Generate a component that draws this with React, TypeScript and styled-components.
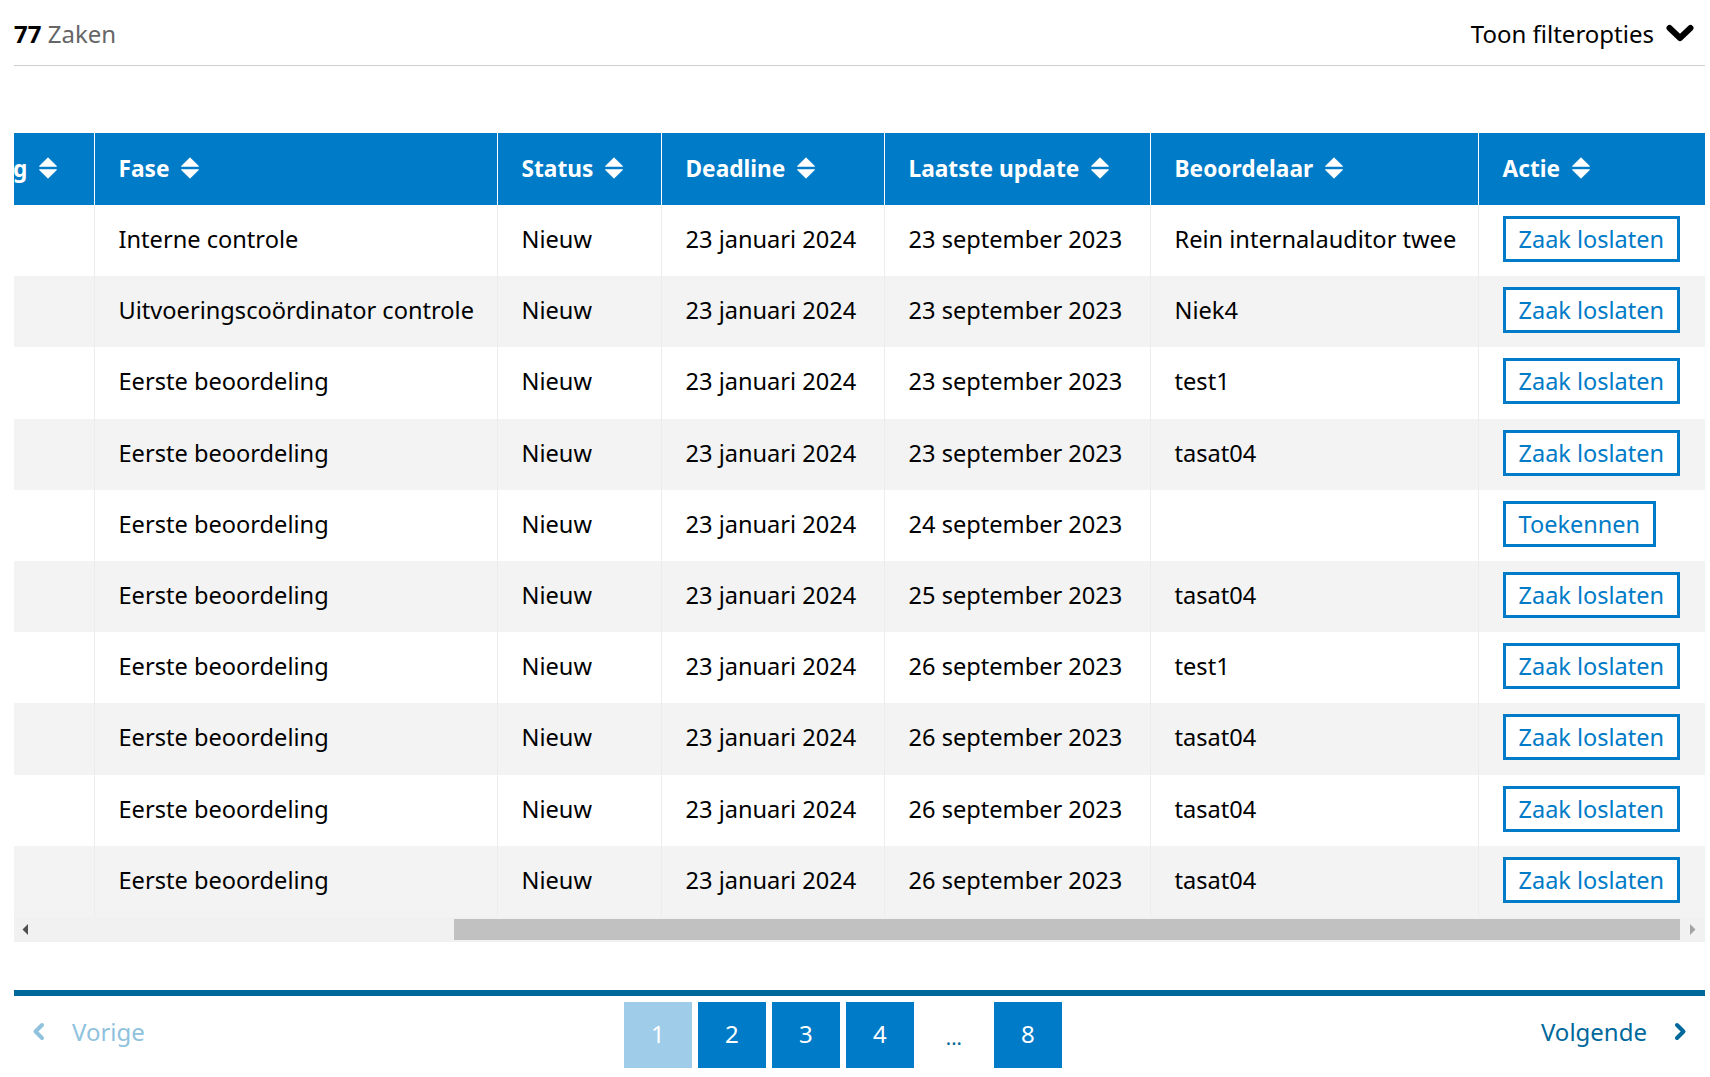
import React, { useLayoutEffect, useRef } from "react";
import styled, { createGlobalStyle } from "styled-components";

const GlobalStyle = createGlobalStyle`
  html, body { margin: 0; padding: 0; background: #fff; }
  body { font-family: "Noto Sans", "Open Sans", sans-serif; color: #000; }
  * { box-sizing: border-box; }
`;

const BLUE = "#007bc7";
const DARK_BLUE = "#01689b";

const Page = styled.div`
  padding: 0 5px 0 14px;
`;

const TopBar = styled.header`
  display: flex;
  justify-content: space-between;
  align-items: center;
  height: 66px;
  padding-top: 1px;
  border-bottom: 1px solid #cfcfcf;
`;

const Count = styled.div`
  font-size: 24px;
  color: #666;
  strong {
    color: #000;
    font-weight: 700;
  }
`;

const FilterToggle = styled.button`
  display: flex;
  align-items: center;
  gap: 12px;
  padding: 0 11px 0 0;
  border: none;
  background: none;
  font-family: inherit;
  font-size: 24px;
  color: #000;
  cursor: pointer;
`;

const TableSection = styled.section`
  margin-top: 67px;
`;

const Scroller = styled.div`
  overflow: hidden;
  width: 100%;
`;

const Table = styled.table<{ $w: number }>`
  border-collapse: collapse;
  table-layout: fixed;
  width: ${(p) => p.$w}px;
`;

const Col = styled.col<{ $w: number }>`
  width: ${(p) => p.$w}px;
`;

const HeadCell = styled.th`
  height: 72px;
  padding: 0 24px 2px;
  background: ${BLUE};
  color: #fff;
  font-size: 22.7px;
  font-weight: 700;
  text-align: left;
  white-space: nowrap;
  overflow: hidden;
  border-left: 1px solid #fff;
  &:first-child { border-left: none; }
`;

const HeadInner = styled.span`
  display: inline-flex;
  align-items: center;
  gap: 11px;
`;

const Row = styled.tr<{ $alt: boolean }>`
  background: ${(p) => (p.$alt ? "#f3f3f3" : "#fff")};
`;

const Cell = styled.td`
  height: 71.2px;
  padding: 0 24px 3px;
  font-size: 23.6px;
  color: #000;
  white-space: nowrap;
  overflow: hidden;
  border-left: 1px solid #ececec;
  &:first-child { border-left: none; }
`;

const ActionButton = styled.button`
  height: 46px;
  padding: 0 13px;
  border: 3px solid ${BLUE};
  background: #fff;
  color: ${BLUE};
  font-family: inherit;
  font-size: 23.5px;
  cursor: pointer;
`;

const ScrollTrack = styled.div`
  display: flex;
  align-items: center;
  height: 25px;
  background: #f1f1f1;
`;

const ScrollArrow = styled.div<{ $w: number }>`
  display: flex;
  align-items: center;
  justify-content: center;
  width: ${(p) => p.$w}px;
  height: 100%;
`;

const ScrollSpacer = styled.div`
  flex: 1;
`;

const ScrollThumb = styled.div<{ $w: number }>`
  width: ${(p) => p.$w}px;
  height: 21px;
  background: #c1c1c1;
`;

const Pagination = styled.nav`
  margin-top: 48px;
  border-top: 6px solid ${DARK_BLUE};
  padding-top: 6px;
  display: flex;
  justify-content: space-between;
  align-items: center;
`;

const PageLink = styled.a<{ $disabled?: boolean; $side: "left" | "right" }>`
  display: flex;
  align-items: center;
  gap: 27px;
  padding: ${(p) => (p.$side === "left" ? "0 0 6px 18px" : "0 18px 6px 0")};
  font-size: 24px;
  color: ${(p) => (p.$disabled ? "#8fc2dd" : DARK_BLUE)};
  text-decoration: none;
  cursor: ${(p) => (p.$disabled ? "default" : "pointer")};
`;

const PageGroup = styled.div`
  display: flex;
  gap: 6px;
`;

const PageButton = styled.button<{ $active?: boolean }>`
  width: 68px;
  height: 66px;
  border: none;
  padding: 0 0 2px;
  background: ${(p) => (p.$active ? "#9fcce9" : BLUE)};
  color: #fff;
  font-family: inherit;
  font-size: 24px;
  cursor: pointer;
`;

const Ellipsis = styled.span`
  display: flex;
  align-items: center;
  justify-content: center;
  width: 68px;
  height: 66px;
  color: ${DARK_BLUE};
  font-size: 20px;
  padding-top: 6px;
`;

const SortIcon = () => (
  <svg width="20" height="22" viewBox="0 0 20 22" aria-hidden>
    <path d="M1.5 9.2 L10 0.8 L18.5 9.2 Z" fill="#fff" stroke="#fff" strokeWidth="1" strokeLinejoin="round" />
    <path d="M1.5 12.8 L10 21.2 L18.5 12.8 Z" fill="#fff" stroke="#fff" strokeWidth="1" strokeLinejoin="round" />
  </svg>
);

const ChevronDown = () => (
  <svg width="28" height="18" viewBox="0 0 28 18" aria-hidden>
    <polyline points="3.5,4 14,14 24.5,4" fill="none" stroke="#000" strokeWidth="6" strokeLinecap="round" strokeLinejoin="round" />
  </svg>
);

const Chevron = ({ dir, color }: { dir: "left" | "right"; color: string }) => (
  <svg width="13" height="19" viewBox="0 0 13 19" aria-hidden>
    <polyline
      points={dir === "left" ? "10,3 3.5,9.5 10,16" : "3,3 9.5,9.5 3,16"}
      fill="none"
      stroke={color}
      strokeWidth="4"
      strokeLinecap="round"
      strokeLinejoin="round"
    />
  </svg>
);

const ScrollTriangle = ({ dir, color }: { dir: "left" | "right"; color: string }) => (
  <svg width="7" height="11" viewBox="0 0 7 11" aria-hidden>
    <path d={dir === "left" ? "M6 0 L0.5 5.5 L6 11 Z" : "M1 0 L6.5 5.5 L1 11 Z"} fill={color} />
  </svg>
);

type Case = {
  nummer: string;
  aanvrager: string;
  regeling: string;
  fase: string;
  status: string;
  deadline: string;
  update: string;
  beoordelaar: string;
  actie: "loslaten" | "toekennen";
};

const rows: Case[] = [
  ["Interne controle", "23 september 2023", "Rein internalauditor twee", "loslaten"],
  ["Uitvoeringscoördinator controle", "23 september 2023", "Niek4", "loslaten"],
  ["Eerste beoordeling", "23 september 2023", "test1", "loslaten"],
  ["Eerste beoordeling", "23 september 2023", "tasat04", "loslaten"],
  ["Eerste beoordeling", "24 september 2023", "", "toekennen"],
  ["Eerste beoordeling", "25 september 2023", "tasat04", "loslaten"],
  ["Eerste beoordeling", "26 september 2023", "test1", "loslaten"],
  ["Eerste beoordeling", "26 september 2023", "tasat04", "loslaten"],
  ["Eerste beoordeling", "26 september 2023", "tasat04", "loslaten"],
  ["Eerste beoordeling", "26 september 2023", "tasat04", "loslaten"],
].map(([fase, update, beoordelaar, actie], i) => ({
  nummer: `Z-2023-${String(412 + i).padStart(4, "0")}`,
  aanvrager: "Aanvrager",
  regeling: "PCZM",
  fase,
  status: "Nieuw",
  deadline: "23 januari 2024",
  update,
  beoordelaar,
  actie: actie as Case["actie"],
}));

const columns = [
  { label: "Zaaknummer", w: 240 },
  { label: "Aanvrager", w: 230 },
  { label: "Regeling", w: 190 },
  { label: "Fase", w: 403 },
  { label: "Status", w: 164 },
  { label: "Deadline", w: 223 },
  { label: "Laatste update", w: 266 },
  { label: "Beoordelaar", w: 328 },
  { label: "Actie", w: 227 },
];

const tableWidth = columns.reduce((sum, c) => sum + c.w, 0);

export default function App() {
  const scrollRef = useRef<HTMLDivElement>(null);

  useLayoutEffect(() => {
    const el = scrollRef.current;
    if (el) el.scrollLeft = el.scrollWidth - el.clientWidth;
  }, []);

  return (
    <>
      <GlobalStyle />
      <Page>
        <TopBar>
          <Count>
            <strong>77</strong> Zaken
          </Count>
          <FilterToggle type="button">
            Toon filteropties
            <ChevronDown />
          </FilterToggle>
        </TopBar>

        <TableSection>
          <Scroller ref={scrollRef}>
            <Table $w={tableWidth}>
              <colgroup>
                {columns.map((c) => (
                  <Col key={c.label} $w={c.w} />
                ))}
              </colgroup>
              <thead>
                <tr>
                  {columns.map((c) => (
                    <HeadCell key={c.label}>
                      <HeadInner>
                        {c.label}
                        <SortIcon />
                      </HeadInner>
                    </HeadCell>
                  ))}
                </tr>
              </thead>
              <tbody>
                {rows.map((r, i) => (
                  <Row key={i} $alt={i % 2 === 1}>
                    <Cell>{r.nummer}</Cell>
                    <Cell>{r.aanvrager}</Cell>
                    <Cell>{r.regeling}</Cell>
                    <Cell>{r.fase}</Cell>
                    <Cell>{r.status}</Cell>
                    <Cell>{r.deadline}</Cell>
                    <Cell>{r.update}</Cell>
                    <Cell>{r.beoordelaar}</Cell>
                    <Cell>
                      <ActionButton type="button">
                        {r.actie === "loslaten" ? "Zaak loslaten" : "Toekennen"}
                      </ActionButton>
                    </Cell>
                  </Row>
                ))}
              </tbody>
            </Table>
          </Scroller>
          <ScrollTrack>
            <ScrollArrow $w={22}>
              <ScrollTriangle dir="left" color="#505050" />
            </ScrollArrow>
            <ScrollSpacer />
            <ScrollThumb $w={1226} />
            <ScrollArrow $w={25}>
              <ScrollTriangle dir="right" color="#a3a3a3" />
            </ScrollArrow>
          </ScrollTrack>
        </TableSection>

        <Pagination>
          <PageLink $side="left" $disabled>
            <Chevron dir="left" color="#8fc2dd" />
            Vorige
          </PageLink>
          <PageGroup>
            <PageButton $active>1</PageButton>
            <PageButton>2</PageButton>
            <PageButton>3</PageButton>
            <PageButton>4</PageButton>
            <Ellipsis>...</Ellipsis>
            <PageButton>8</PageButton>
          </PageGroup>
          <PageLink $side="right" href="#">
            Volgende
            <Chevron dir="right" color={DARK_BLUE} />
          </PageLink>
        </Pagination>
      </Page>
    </>
  );
}
